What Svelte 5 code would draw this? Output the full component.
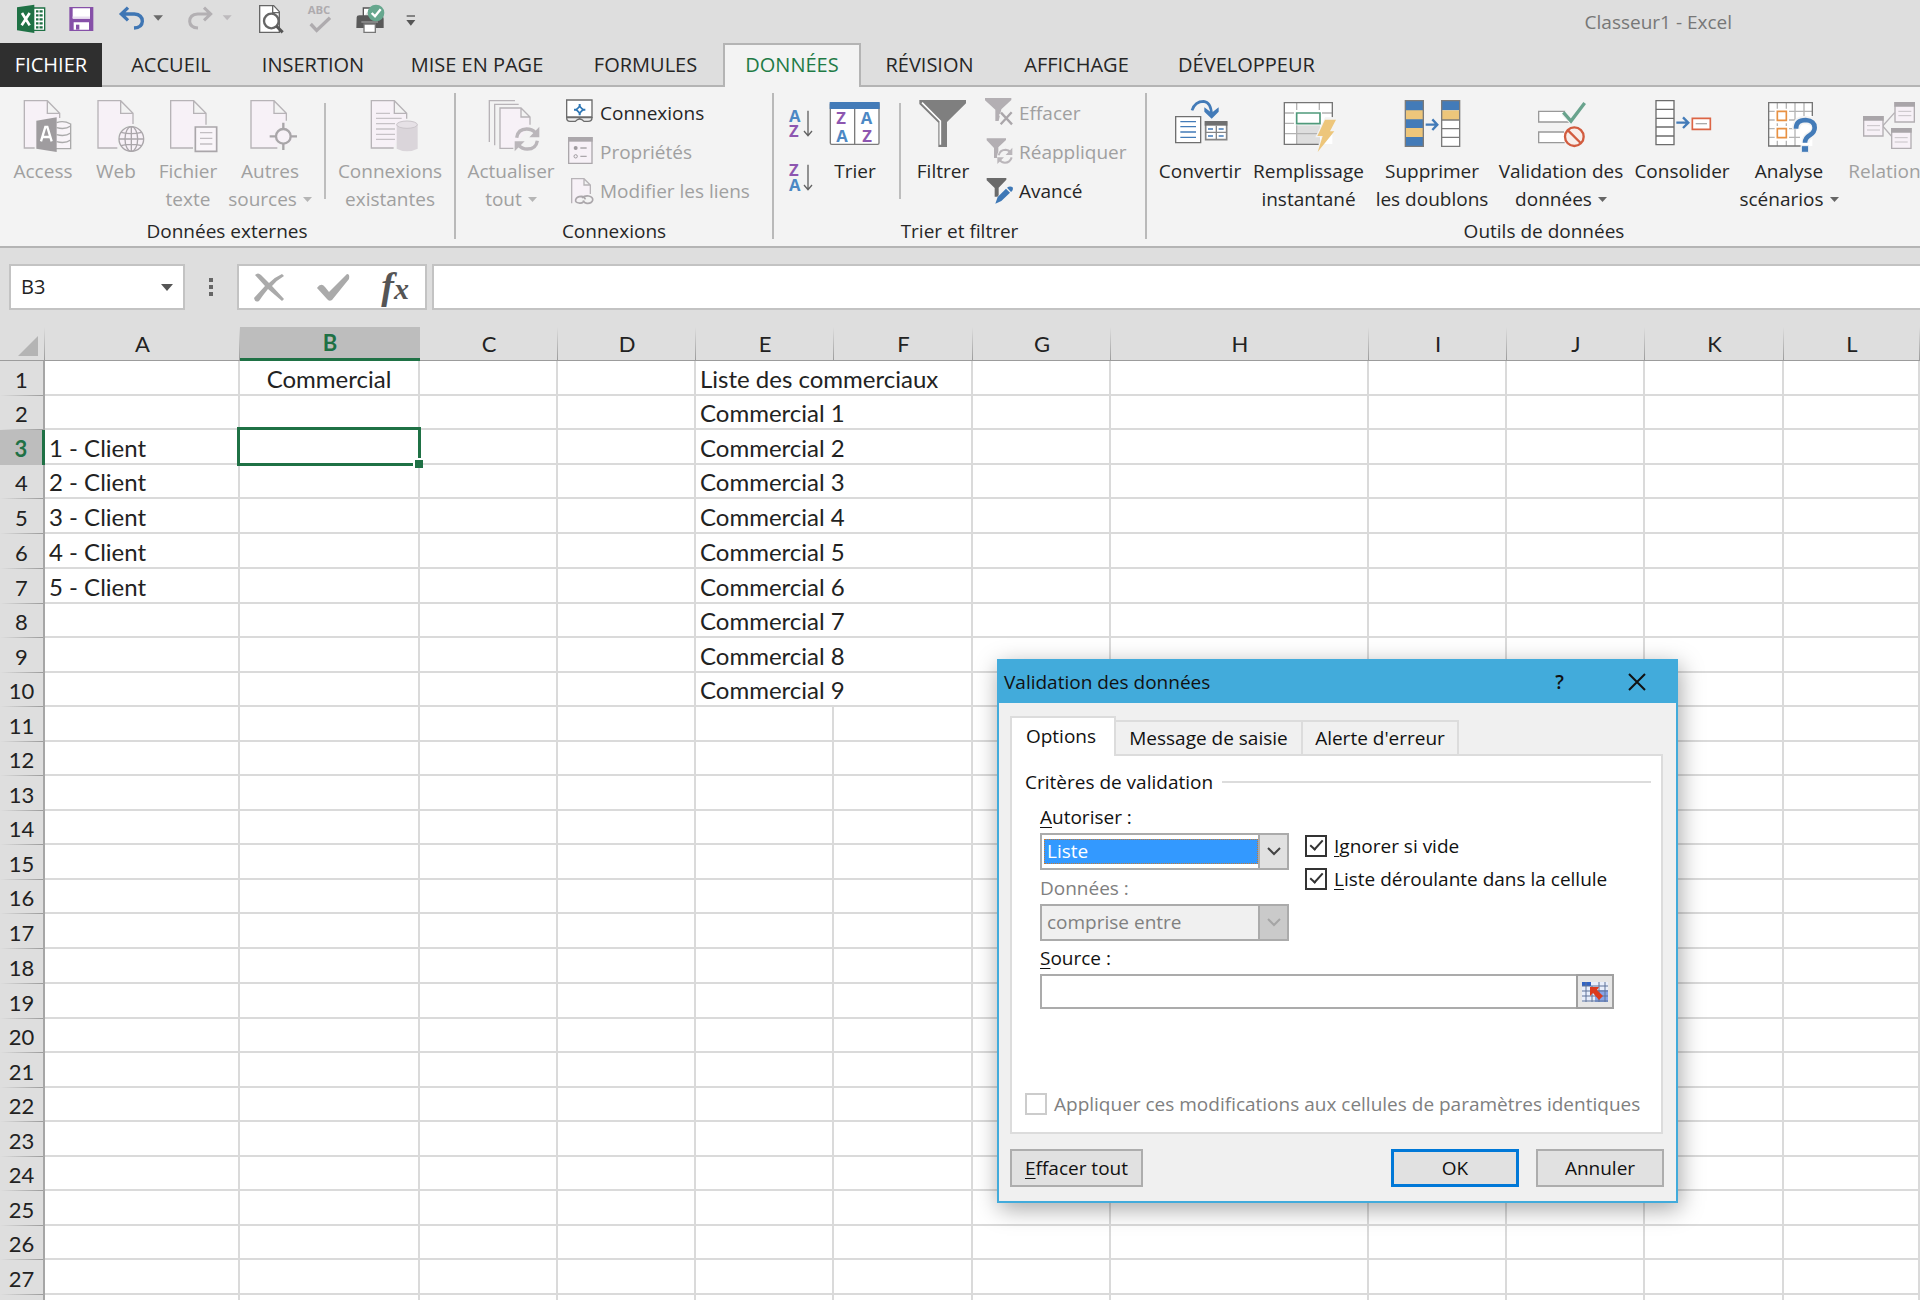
<script>
  const tabs = ['ACCUEIL', 'INSERTION', 'MISE EN PAGE', 'FORMULES', 'DONNÉES', 'RÉVISION', 'AFFICHAGE', 'DÉVELOPPEUR'];
  const columns = ['A', 'B', 'C', 'D', 'E', 'F', 'G', 'H', 'I', 'J', 'K', 'L'];
  const clients = { 3: '1 - Client', 4: '2 - Client', 5: '3 - Client', 6: '4 - Client', 7: '5 - Client' };
  const numberedRows = 27;

  function listEntry(row) {
    if (row === 1) return 'Liste des commerciaux';
    return row <= 10 ? `Commercial ${row - 1}` : '';
  }

  // One extra unnumbered row fills the strip under the last full row.
  const rows = Array.from({ length: numberedRows + 1 }, (_, i) => ({
    n: i + 1,
    label: i < numberedRows ? i + 1 : '',
    client: clients[i + 1] ?? '',
    entry: listEntry(i + 1),
  }));

  let ignoreBlank = $state(true);
  let inCell = $state(true);
</script>

{#snippet caret()}
  <svg class="caret" viewBox="0 0 9 5" aria-hidden="true"><path d="M0 0H9L4.5 5Z" /></svg>
{/snippet}

{#snippet big(icon, first, second, hasCaret, cls)}
  <button class="big {cls}">
    {@render icon()}
    <span class="lbl">{first}</span>
    {#if second}<span class="lbl">{second}{#if hasCaret}{@render caret()}{/if}</span>{/if}
  </button>
{/snippet}

{#snippet small(icon, text, cls)}
  <button class="small {cls}">{@render icon()}<span>{text}</span></button>
{/snippet}

{#snippet icoAccess()}
  <svg class="ico" viewBox="39 291 180 168" aria-hidden="true">
    <path d="M104 444H73V302H142L179 340V354M142 302V340H179" fill="#f7f1f7" stroke="#b7b3b7" stroke-width="4" />
    <path d="M165 368V446H212V372Q190 360 170 368" fill="#f8f4f8" stroke="#aaa" stroke-width="4" />
    <path d="M170 383Q195 390 212 378M170 404Q195 411 212 399M170 425Q195 432 212 420" fill="none" stroke="#aaa" stroke-width="4" />
    <path d="M109 362L170 352V456L109 446Z" fill="#9f9c9f" />
    <path d="M123 424L136 381H142L155 424M128 411H150" fill="none" stroke="#fff" stroke-width="7" />
  </svg>
{/snippet}
{#snippet icoWeb()}
  <svg class="ico" viewBox="256 291 180 168" aria-hidden="true">
    <path d="M350 444H292V302H360L397 340V372M360 302V340H397" fill="#f7f1f7" stroke="#b7b3b7" stroke-width="4" />
    <circle cx="392" cy="417" r="43" fill="#f3f3f3" />
    <g fill="none" stroke="#aaa6aa" stroke-width="4">
      <circle cx="392" cy="417" r="37" fill="#f7f1f7" />
      <ellipse cx="392" cy="417" rx="19" ry="37" /><path d="M392 380V454M355 417H429M361 397Q392 405 423 397M361 437Q392 429 423 437" />
    </g>
  </svg>
{/snippet}
{#snippet icoFile()}
  <svg class="ico" viewBox="471 291 180 168" aria-hidden="true">
    <path d="M576 444H509V302H578L615 340V374M578 302V340H615" fill="#f7f1f7" stroke="#b7b3b7" stroke-width="4" />
    <path d="M583 381H647V454H583Z" fill="#f9f5f9" stroke="#aaa6aa" stroke-width="5" />
    <path d="M597 398H634M597 415H634M597 432H634" stroke="#c2bec2" stroke-width="4" />
  </svg>
{/snippet}
{#snippet icoOther()}
  <svg class="ico" viewBox="720 291 180 168" aria-hidden="true">
    <path d="M832 444H753V302H822L859 340V362M822 302V340H859" fill="#f7f1f7" stroke="#b7b3b7" stroke-width="4" />
    <circle cx="850" cy="409" r="30" fill="#f5f1f5" />
    <circle cx="850" cy="409" r="22" fill="#f7f1f7" stroke="#a9a6a9" stroke-width="7" />
    <path d="M850 368V387M850 431V450M809 409H828M872 409H891" stroke="#a9a6a9" stroke-width="7" />
  </svg>
{/snippet}
{#snippet icoExisting()}
  <svg class="ico" viewBox="1077 291 180 168" aria-hidden="true">
    <path d="M1178 444H1111V302H1180L1217 340V356M1180 302V340H1217" fill="#f7f1f7" stroke="#b7b3b7" stroke-width="4" />
    <path d="M1125 340H1167M1125 355H1202M1125 371H1182M1125 387H1182M1125 403H1182M1125 418H1182" stroke="#c6c2c6" stroke-width="4" />
    <path d="M1187 373V446Q1218 462 1250 446V373Z" fill="#dad5da" />
    <ellipse cx="1218" cy="374" rx="31" ry="11" fill="#e6e1e6" stroke="#cac5ca" stroke-width="3" />
  </svg>
{/snippet}
{#snippet icoRefresh()}
  <svg class="ico" viewBox="93 51 180 168" aria-hidden="true">
    <path d="M118 186V62H195M134 196V73H206" fill="none" stroke="#b7b3b7" stroke-width="4" />
    <path d="M190 205H150V84H213L240 111V134M213 84V111H240" fill="#f7f1f7" stroke="#b7b3b7" stroke-width="4" />
    <path d="M200 173Q204 147 230 147Q246 147 256 158M262 182Q258 207 232 207Q216 207 206 196" fill="none" stroke="#bab6ba" stroke-width="10" />
    <path d="M268 140V172H238ZM194 214V184H224Z" fill="#bab6ba" />
  </svg>
{/snippet}
{#snippet icoConn()}
  <svg class="ico-s" viewBox="350 54 84 84" aria-hidden="true">
    <path d="M352 57H428V108H352Z" fill="#fff" stroke="#6c6c6c" stroke-width="4" />
    <path d="M352 110Q352 121 362 121H378Q384 114 391 114T404 121H416Q428 121 428 110Z" fill="#eee" stroke="#6c6c6c" stroke-width="4" />
    <path d="M391 76L401 86L391 96L381 86Z" fill="#fff" stroke="#2f77b5" stroke-width="5" />
    <path d="M391 69V78M391 94V103M374 86H383M399 86H408" stroke="#2f77b5" stroke-width="6" />
  </svg>
{/snippet}
{#snippet icoProps()}
  <svg class="ico-s" viewBox="350 174 84 84" aria-hidden="true">
    <path d="M358 173H428V250H358Z" fill="#f7f1f7" stroke="#aba7ab" stroke-width="4" />
    <path d="M356 171H430V185H356Z" fill="#aba7ab" />
    <circle cx="379" cy="204" r="6" fill="#9f9b9f" /><circle cx="379" cy="229" r="5" fill="none" stroke="#9f9b9f" stroke-width="3" />
    <path d="M393 204H412M393 229H412" stroke="#aba7ab" stroke-width="4" />
  </svg>
{/snippet}
{#snippet icoLinks()}
  <svg class="ico-s" viewBox="350 291 84 84" aria-hidden="true">
    <path d="M367 370V296H404L423 315V342M404 296V315H423" fill="#f7f1f7" stroke="#b7b3b7" stroke-width="4" />
    <g fill="none" stroke="#aba7ab" stroke-width="5"><path d="M402 366Q396 371 389 369Q377 368 379 359Q382 349 396 349Q406 350 408 358" /><path d="M398 354Q406 346 418 348Q432 351 430 361Q427 371 413 370Q403 369 402 361" /></g>
  </svg>
{/snippet}
{#snippet icoTrier()}
  <svg class="ico" viewBox="195 51 180 168" aria-hidden="true">
    <rect x="211" y="68" width="146" height="125" rx="4" fill="#fff" stroke="#7b7b7b" stroke-width="4" />
    <path d="M209 66H359V87H209Z" fill="#437bb8" /><path d="M284 87V192" stroke="#7b7b7b" stroke-width="4" />
    <g class="az"><text class="z" x="229" y="133">Z</text><text class="a" x="229" y="185">A</text><text class="a" x="302" y="133">A</text><text class="z" x="307" y="185">Z</text></g>
  </svg>
{/snippet}
{#snippet icoFilter()}
  <svg class="ico" viewBox="459 51 180 168" aria-hidden="true">
    <path d="M478 60H618V70L561 126V201H535V128L478 72Z" fill="#7f7f7f" />
    <path d="M486 68L541 123V194" fill="none" stroke="#fff" stroke-width="5" />
  </svg>
{/snippet}
{#snippet icoClear()}
  <svg class="ico-s" viewBox="675 54 84 84" aria-hidden="true">
    <path d="M675 51H754V57L724 85L716 120H706V86L675 58Z" fill="#b3afb3" />
    <path d="M722 96L756 130M755 94L721 131" stroke="#f3f3f3" stroke-width="16" /><path d="M723 95L756 130M755 94L722 130" stroke="#aaa6aa" stroke-width="7" />
  </svg>
{/snippet}
{#snippet icoReapply()}
  <svg class="ico-s" viewBox="675 174 84 84" aria-hidden="true">
    <path d="M680 175H738V180L715 202V234H702V204L680 181Z" fill="#b3afb3" />
    <circle cx="735" cy="229" r="24" fill="#f3f3f3" />
    <path d="M716 226Q720 209 737 209Q746 210 751 216M755 232Q750 248 735 248Q724 248 718 239" fill="none" stroke="#bab6ba" stroke-width="6" />
    <path d="M757 203V225H737ZM712 252V232H732Z" fill="#bab6ba" />
  </svg>
{/snippet}
{#snippet icoAdvanced()}
  <svg class="ico-s" viewBox="675 291 84 84" aria-hidden="true">
    <path d="M680 294H739V299L716 323V350H704V324L680 301Z" fill="#6a6a6a" />
    <path d="M710 370L746 328" stroke="#f3f3f3" stroke-width="22" />
    <path d="M713 351L738 326L750 338L724 363L706 371ZM741 323Q750 317 758 322Q761 330 753 336Z" fill="#3e78b6" />
  </svg>
{/snippet}
{#snippet icoConvert()}
  <svg class="ico" viewBox="90 51 180 168" aria-hidden="true">
    <path d="M107 110H182V188H107Z" fill="#fff" stroke="#6f6f6f" stroke-width="4" />
    <path d="M121 125H168M121 140H168M121 156H168M121 172H168" stroke="#437bb8" stroke-width="4" />
    <path d="M197 126H260V179H197Z" fill="#fff" stroke="#858585" stroke-width="5" />
    <path d="M194 123H262V137H194Z" fill="#707070" /><path d="M229 137V178M197 157H260" stroke="#858585" stroke-width="4" />
    <path d="M204 147H219M236 147H251M204 168H219M236 168H251" stroke="#437bb8" stroke-width="5" />
    <path d="M156 91Q165 64 191 64Q213 66 215 104" fill="none" stroke="#437bb8" stroke-width="8" />
    <path d="M193 82L215 98L236 82V95L215 116L193 95Z" fill="#437bb8" />
  </svg>
{/snippet}
{#snippet icoFlash()}
  <svg class="ico" viewBox="417 51 180 168" aria-hidden="true">
    <path d="M433 68H577V192H433Z" fill="#fff" /><path d="M470 136H540V192H470Z" fill="#dedede" />
    <path d="M470 68V90M470 136V192M538 68V90M433 99H462M546 99H577M433 130H462M433 161H540" fill="none" stroke="#b2b2b2" stroke-width="4" />
    <path d="M577 112V68H433V193H536" fill="none" stroke="#757575" stroke-width="4" />
    <path d="M470 99H540V131H470Z" fill="#fff" stroke="#4f9a7b" stroke-width="5" />
    <path d="M555 112H596L580 146H590L530 220L543 172H526Z" fill="#f3f3f3" /><path d="M555 119H588L570 154H583L533 216L548 168H532Z" fill="#edc67b" />
  </svg>
{/snippet}
{#snippet icoDedup()}
  <svg class="ico" viewBox="787 51 180 168" aria-hidden="true">
    <path d="M797 62H851V199H797Z" fill="#437bb8" /><path d="M797 91H851V118H797ZM797 144H851V171H797Z" fill="#edc67b" />
    <path d="M906 62H960V199H906Z" fill="#fff" /><path d="M906 62H960V91H906Z" fill="#437bb8" /><path d="M906 91H960V120H906Z" fill="#edc67b" />
    <path d="M797 62H851V199H797ZM906 62H960V199H906ZM906 120H960M906 146H960M906 172H960" fill="none" stroke="#7b7b7b" stroke-width="4" />
    <path d="M858 134H892M878 118L893 134L878 150" fill="none" stroke="#437bb8" stroke-width="7" />
  </svg>
{/snippet}
{#snippet icoValid()}
  <svg class="ico" viewBox="33 51 180 168" aria-hidden="true">
    <path d="M136 94H56V126H150M132 156H56V188H134" fill="#fff" stroke="#999" stroke-width="4" />
    <path d="M131 98L153 122L193 70" fill="none" stroke="#f3f3f3" stroke-width="18" /><path d="M130 97L153 123L194 69" fill="none" stroke="#69a38d" stroke-width="10" />
    <circle cx="163" cy="170" r="28" fill="#f8eeea" stroke="#d25c3f" stroke-width="7" /><path d="M144 151L182 189" stroke="#d25c3f" stroke-width="7" />
  </svg>
{/snippet}
{#snippet icoConso()}
  <svg class="ico" viewBox="396 51 180 168" aria-hidden="true">
    <path d="M408 62H462V194H408ZM408 88H462M408 115H462M408 141H462M408 168H462" fill="#fff" stroke="#6c6c6c" stroke-width="4" />
    <path d="M469 128H504M489 112L505 128L489 144" fill="none" stroke="#437bb8" stroke-width="7" />
    <path d="M517 115H571V148H517Z" fill="#fff" stroke="#dc6545" stroke-width="5" /><path d="M527 131H561" stroke="#aaa" stroke-width="4" />
  </svg>
{/snippet}
{#snippet icoWhatIf()}
  <svg class="ico" viewBox="717 51 180 168" aria-hidden="true">
    <path d="M746 68H877V198H746Z" fill="#fff" />
    <path d="M772 68V198M799 68V198M825 68V198M852 68V108M746 94H877M746 120H830M746 146H830M746 172H840" fill="none" stroke="#b5b5b5" stroke-width="4" />
    <path d="M877 108V68H746V198H842" fill="none" stroke="#757575" stroke-width="4" />
    <path d="M764 86H807V130H764ZM764 138H807V182H764Z" fill="#fff" /><path d="M772 94H799V121H772ZM772 146H799V173H772Z" fill="#fff" stroke="#e89143" stroke-width="5" />
    <path d="M828 148Q828 120 856 120Q886 122 886 143Q886 156 870 166Q856 174 856 188" fill="none" stroke="#f3f3f3" stroke-width="24" />
    <path d="M828 146Q828 120 857 120Q884 122 884 143Q884 156 870 165Q855 174 855 188" fill="none" stroke="#437bb8" stroke-width="14" /><path d="M844 197H866V217H844Z" fill="#437bb8" stroke="#f3f3f3" stroke-width="3" />
  </svg>
{/snippet}
{#snippet icoRel()}
  <svg class="ico" viewBox="1017 51 180 168" aria-hidden="true">
    <path d="M1088 138L1124 98M1088 138L1114 168" stroke="#b7b3b7" stroke-width="4" />
    <g fill="#f7f1f7" stroke="#b2aeb2" stroke-width="4"><path d="M1031 110H1089V168H1031ZM1125 68H1183V126H1125ZM1115 146H1173V205H1115Z" /></g>
    <path d="M1029 108H1091V122H1029ZM1123 66H1185V80H1123ZM1113 144H1175V158H1113Z" fill="#a9a5a9" />
    <path d="M1041 137H1080M1041 150H1080M1135 94H1174M1135 107H1174M1124 173H1163M1124 186H1163" stroke="#c6c2c6" stroke-width="3" />
  </svg>
{/snippet}

<div class="app">
  <header class="titlebar">
    <svg class="q" viewBox="48 12 90 90" role="img" aria-label="Excel">
      <path d="M98 24H134V91H98Z" fill="#fff" stroke="#1f7145" stroke-width="4" />
      <path d="M108 34H128M108 46H128M108 58H128M108 70H128M108 82H128" stroke="#1f7145" stroke-width="7" /><path d="M117 28V88" stroke="#fff" stroke-width="3" />
      <path d="M51 22L103 14V99L51 91Z" fill="#1f7145" /><path d="M66 39L89 76M89 39L65 76" stroke="#fff" stroke-width="8" />
    </svg>
    <button aria-label="Enregistrer">
      <svg class="q" viewBox="198 12 90 90"><path d="M208 21H280V93H208Z" fill="#8650a8" /><path d="M218 25H270V56H218ZM221 67H267V89H221Z" fill="#fff" /><path d="M228 74H238V89H228Z" fill="#8650a8" /><path d="M218 52H270" stroke="#e9dff0" stroke-width="5" /></svg>
    </button>
    <button aria-label="Annuler la saisie">
      <svg class="q wide" viewBox="348 12 150 90"><path d="M364 42H403Q427 44 427 64Q426 83 402 84M384 23L364 42L384 61" fill="none" stroke="#3f76b4" stroke-width="10" /><path d="M460 46H489L474.500 62Z" fill="#6a6a6a" /></svg>
    </button>
    <button aria-label="Rétablir">
      <svg class="q wide" viewBox="558 12 150 90"><path d="M632 42H593Q569 44 569 64Q570 83 594 84M612 23L632 42L612 61" fill="none" stroke="#b3b0b3" stroke-width="9" /><path d="M668 46H695L681.500 61Z" fill="#bdbabd" /></svg>
    </button>
    <button aria-label="Aperçu avant impression">
      <svg class="q" viewBox="768 12 90 90"><path d="M779 17H821L838 35V97H779Z" fill="#fff" stroke="#666" stroke-width="4" /><path d="M818 17V38H838" fill="none" stroke="#666" stroke-width="4" /><circle cx="814" cy="63" r="22" fill="#fff" stroke="#666" stroke-width="7" /><path d="M829 78L848 97" stroke="#555" stroke-width="9" /></svg>
    </button>
    <button aria-label="Orthographe">
      <svg class="q" viewBox="918 12 90 90"><text class="abc" x="923" y="41">ABC</text><path d="M932 72L950 91L990 53" fill="none" stroke="#aeabae" stroke-width="10" /></svg>
    </button>
    <button aria-label="Impression rapide">
      <svg class="q" viewBox="1068 12 90 90"><path d="M1090 52V24H1112" fill="#fff" stroke="#555" stroke-width="4" /><path d="M1070 52Q1070 46 1078 46H1144Q1151 48 1151 56V84H1069Z" fill="#595959" /><path d="M1092 72H1126V97H1092Z" fill="#fff" stroke="#777" stroke-width="4" /><path d="M1084 66H1134" stroke="#8d8d8d" stroke-width="5" /><circle cx="1128" cy="39" r="25" fill="#66a78e" /><path d="M1115 39L1125 49L1142 28" fill="none" stroke="#fff" stroke-width="7" /></svg>
    </button>
    <button aria-label="Personnaliser la barre">
      <svg class="q more" viewBox="1217 12 60 90"><path d="M1219 48H1244" stroke="#555" stroke-width="4" /><path d="M1218 60H1245L1231.500 77Z" fill="#555" /></svg>
    </button>
    <span class="doc">Classeur1 - Excel</span>
  </header>

  <nav class="tabs">
    <button class="tab file">FICHIER</button>
    {#each tabs as t}
      <button class="tab" class:on={t === 'DONNÉES'}>{t}</button>
    {/each}
  </nav>

  <section class="ribbon">
    <div class="group">
      <div class="items">
        {@render big(icoAccess, 'Access', '', false, 'off w86')}
        {@render big(icoWeb, 'Web', '', false, 'off w60')}
        {@render big(icoFile, 'Fichier', 'texte', false, 'off w84')}
        {@render big(icoOther, 'Autres', 'sources', true, 'off w80')}
        <i class="bar"></i>
        {@render big(icoExisting, 'Connexions', 'existantes', false, 'off w128')}
      </div>
      <div class="gname">Données externes</div>
    </div>
    <div class="group">
      <div class="items">
        {@render big(icoRefresh, 'Actualiser', 'tout', true, 'off w110')}
        <div class="stack wide-stack">
          {@render small(icoConn, 'Connexions', '')}
          {@render small(icoProps, 'Propriétés', 'off')}
          {@render small(icoLinks, 'Modifier les liens', 'off')}
        </div>
      </div>
      <div class="gname">Connexions</div>
    </div>
    <div class="group">
      <div class="items">
        <div class="sorts">
          <button aria-label="Trier de A à Z">
            <svg class="sort" viewBox="85 87 81 90"><g class="az"><text class="a" x="88" y="126">A</text><text class="z" x="88" y="170">Z</text></g><path d="M145 92V165M133 153L145 167L157 153" fill="none" stroke="#626262" stroke-width="4" /></svg>
          </button>
          <button aria-label="Trier de Z à A">
            <svg class="sort" viewBox="85 87 81 90"><g class="az"><text class="z" x="88" y="126">Z</text><text class="a" x="88" y="170">A</text></g><path d="M145 92V165M133 153L145 167L157 153" fill="none" stroke="#626262" stroke-width="4" /></svg>
          </button>
        </div>
        {@render big(icoTrier, 'Trier', '', false, 'w60')}
        <i class="bar"></i>
        {@render big(icoFilter, 'Filtrer', '', false, 'w84')}
        <div class="stack">
          {@render small(icoClear, 'Effacer', 'off')}
          {@render small(icoReapply, 'Réappliquer', 'off')}
          {@render small(icoAdvanced, 'Avancé', '')}
        </div>
      </div>
      <div class="gname">Trier et filtrer</div>
    </div>
    <div class="group tools">
      <div class="items">
        {@render big(icoConvert, 'Convertir', '', false, 'w86')}
        {@render big(icoFlash, 'Remplissage', 'instantané', false, 'w131')}
        {@render big(icoDedup, 'Supprimer', 'les doublons', false, 'w116')}
        {@render big(icoValid, 'Validation des', 'données', true, 'w142')}
        {@render big(icoConso, 'Consolider', '', false, 'w100')}
        {@render big(icoWhatIf, 'Analyse', 'scénarios', true, 'w114')}
        {@render big(icoRel, 'Relations', '', false, 'off w86')}
      </div>
      <div class="gname">Outils de données</div>
    </div>
  </section>

  <section class="formula">
    <div class="box namebox">
      <input aria-label="Zone Nom" value="B3" />
      <button aria-label="Liste des noms"><svg class="namecaret" viewBox="0 0 12 7"><path d="M0 0H12L6 7Z" fill="#555" /></svg></button>
    </div>
    <svg class="dots" viewBox="0 0 4 18" aria-hidden="true"><path d="M0 0H4V4H0ZM0 7H4V11H0ZM0 14H4V18H0Z" fill="#666" /></svg>
    <div class="box fxbox">
      <button aria-label="Annuler l'entrée"><svg class="fi" viewBox="0 0 32 32"><path d="M2 4Q5 1 8 4L16 12Q22 6 29 3L31 5Q24 9 19 15L31 28L29 30L15 18Q10 24 6 30Q2 32 1 27L12 15Z" fill="#aaa" /></svg></button>
      <button aria-label="Entrer"><svg class="fi" viewBox="0 0 32 32"><path d="M0 17Q4 11 8 16L12 21L30 3Q33 3 32 8L15 29Q12 31 10 28Z" fill="#aaa" /></svg></button>
      <button class="fx" aria-label="Insérer une fonction"><span class="f">f</span><span class="x">x</span></button>
    </div>
    <input class="box bar-input" aria-label="Barre de formule" />
  </section>

  <main class="sheet">
    <table>
      <colgroup>
        <col class="c-head" /><col class="c-a" /><col class="c-b" /><col class="c-m" /><col class="c-m" /><col class="c-m" /><col class="c-l" />
        <col class="c-m" /><col class="c-h" /><col class="c-m" /><col class="c-m" /><col class="c-l" /><col />
      </colgroup>
      <thead>
        <tr>
          <th class="corner"><svg viewBox="0 0 20 20" aria-hidden="true"><path d="M20 0V20H0Z" fill="#b4b4b4" /></svg></th>
          {#each columns as c}<th scope="col" class:picked={c === 'B'}>{c}</th>{/each}
        </tr>
      </thead>
      <tbody>
        {#each rows as r}
          <tr>
            <th scope="row" class:picked={r.n === 3}>{r.label}</th>
            <td>{r.client}</td>
            <td class="mid">{#if r.n === 1}Commercial{/if}{#if r.n === 3}<span class="cursor"><i></i></span>{/if}</td>
            <td></td>
            <td></td>
            {#if r.entry}<td colspan="2">{r.entry}</td>{:else}<td></td><td></td>{/if}
            <td></td><td></td><td></td><td></td><td></td><td></td>
          </tr>
        {/each}
      </tbody>
    </table>
  </main>

  <div class="dialog" role="dialog" aria-labelledby="dlg-title">
    <div class="dhead">
      <h2 id="dlg-title">Validation des données</h2>
      <button class="help" aria-label="Aide">?</button>
      <button aria-label="Fermer"><svg class="close" viewBox="0 0 18 18"><path d="M1 1L17 17M17 1L1 17" fill="none" stroke="#111" stroke-width="2" /></svg></button>
    </div>
    <div class="dbody">
      <div class="dtabs">
        <button class="on">Options</button><button>Message de saisie</button><button>Alerte d'erreur</button>
      </div>
      <div class="panel">
        <h3>Critères de validation</h3>
        <div class="fields">
          <div class="left">
            <label for="allow"><u>A</u>utoriser :</label>
            <div class="combo">
              <select id="allow"><option>Liste</option></select>
              <span class="drop"><svg viewBox="0 0 14 9"><path d="M1 1L7 7L13 1" /></svg></span>
            </div>
            <label for="data" class="dim">Données :</label>
            <div class="combo dis">
              <select id="data" disabled><option>comprise entre</option></select>
              <span class="drop"><svg viewBox="0 0 14 9"><path d="M1 1L7 7L13 1" /></svg></span>
            </div>
          </div>
          <div class="checks">
            <label class="check"><input type="checkbox" bind:checked={ignoreBlank} /><span><u>I</u>gnorer si vide</span></label>
            <label class="check"><input type="checkbox" bind:checked={inCell} /><span><u>L</u>iste déroulante dans la cellule</span></label>
          </div>
        </div>
        <label class="srclabel" for="source"><u>S</u>ource :</label>
        <div class="source">
          <input id="source" />
          <button aria-label="Sélectionner la plage">
            <svg viewBox="0 0 28 22"><path d="M1 1H27V21H1Z" fill="#e8eefb" /><path d="M1 1H10V5H1Z" fill="#2f62c4" /><path d="M14 9H27V21H14Z" fill="#86a4e8" /><path d="M1 5H27M1 10H27M1 15H27M1 20H27M5 1V21M11 5V21M18 1V21M24 1V21" fill="none" stroke="#5f7398" stroke-width="1" /><path d="M9 6L18 6L16 9L22 15L18 19L12 12L9 15Z" fill="#dc3a1e" /></svg>
          </button>
        </div>
        <label class="check apply dim"><input type="checkbox" disabled /><span>Appliquer ces modifications aux cellules de paramètres identiques</span></label>
      </div>
      <div class="actions">
        <button class="clear"><u>E</u>ffacer tout</button>
        <button class="ok">OK</button>
        <button>Annuler</button>
      </div>
    </div>
  </div>
</div>

<style>
  :global(body) { margin: 0; }
  .app {
    position: relative; display: flex; flex-direction: column; height: 100vh; overflow: hidden;
    background: #dedede; color: #262626; font: 19px/28px "Open Sans", "Noto Sans", sans-serif;
  }
  .app, .app * { box-sizing: border-box; }
  button, input, select { font: inherit; color: inherit; margin: 0; padding: 0; border: 0; background: none; border-radius: 0; }
  svg { display: block; overflow: visible; }

  .titlebar { display: flex; align-items: center; gap: 20px; height: 43px; padding: 0 188px 6px 16px; flex: none; }
  .q { width: 30px; height: 30px; }
  .q.wide { width: 50px; }
  .q.more { width: 20px; }
  .abc { font: bold 34px "Open Sans", sans-serif; fill: #aeabae; }
  .doc { margin-left: auto; padding-top: 6px; color: #777; }

  .tabs { display: grid; grid-template-columns: 102px 138px 146px 182px 155px 138px 137px 157px 183px; height: 44px; flex: none; box-shadow: inset 0 -2px #b4b4b4; }
  .tab { font-size: 20px; white-space: nowrap; }
  .tab.file { background: #2f2f2f; color: #fff; }
  .tab.on { background: #f3f3f3; color: #1f7b46; border: 2px solid #b4b4b4; border-bottom: 0; padding-bottom: 2px; }

  .ribbon { display: flex; flex: none; height: 161px; background: #f3f3f3; border-bottom: 2px solid #b4b4b4; padding-top: 6px; overflow: hidden; }
  .group { display: flex; flex-direction: column; flex: none; height: 146px; border-right: 2px solid #b9b9b9; }
  .tools { padding-left: 10px; width: 794px; border: 0; }
  .items { display: flex; flex: none; height: 124px; align-items: flex-start; }
  .gname { text-align: center; line-height: 28px; white-space: nowrap; }
  .tools .gname { padding-right: 10px; }
  .big { display: flex; flex-direction: column; align-items: center; padding-top: 4px; flex: none; }
  .ico { width: 60px; height: 56px; margin-bottom: 4px; }
  .lbl { display: flex; align-items: center; justify-content: center; height: 28px; white-space: nowrap; }
  .caret { width: 9px; height: 5px; margin-left: 6px; fill: #666; }
  .off { color: #a0a0a0; }
  .off .caret { fill: #b5b5b5; }
  .w60 { width: 60px; } .w80 { width: 80px; } .w84 { width: 84px; } .w86 { width: 86px; } .w100 { width: 100px; } .w110 { width: 110px; }
  .w114 { width: 114px; } .w116 { width: 116px; } .w128 { width: 128px; } .w131 { width: 131px; } .w142 { width: 142px; }
  .bar { width: 2px; height: 96px; margin: 10px 0 0 14px; background: #bdbdbd; flex: none; }
  .stack { display: flex; flex-direction: column; width: 160px; }
  .wide-stack { width: 206px; }
  .small { display: flex; align-items: center; gap: 6px; height: 39px; white-space: nowrap; }
  .ico-s { width: 28px; height: 28px; flex: none; }
  .sorts { display: flex; flex-direction: column; gap: 24px; width: 51px; padding: 16px 0 0 14px; }
  .sort { width: 27px; height: 30px; }
  .az { font: bold 50px "Open Sans", sans-serif; }
  .a { fill: #4c88c4; }
  .z { fill: #8d56b0; }

  .formula { display: flex; align-items: center; height: 79px; padding: 0 0 1px 9px; flex: none; }
  .box { display: flex; align-items: center; height: 46px; background: #fff; border: 2px solid #c3c3c3; }
  .namebox { width: 176px; padding: 0 10px; }
  .namebox input { flex: 1; min-width: 0; font-size: 20px; color: #222; }
  .namecaret { width: 12px; height: 7px; }
  .dots { width: 4px; height: 18px; margin: 0 24px; }
  .fxbox { width: 190px; justify-content: space-between; padding: 0 16px 0 14px; }
  .fi { width: 32px; height: 32px; }
  .fx { font: italic bold 38px/40px "Liberation Serif", serif; color: #555; }
  .fx .x { font-size: 30px; }
  .bar-input { flex: 1; min-width: 0; margin-left: 5px; border-right: 0; }

  .sheet { flex: 1; min-height: 0; overflow: hidden; background: #fff; color: #222; font: 24px/32px Lato, sans-serif; }
  table { width: 100%; table-layout: fixed; border-collapse: separate; border-spacing: 0; }
  .c-head { width: 45px; } .c-a { width: 195px; } .c-b { width: 180px; } .c-m { width: 138px; } .c-l { width: 139px; } .c-h { width: 258px; }
  th, td { padding: 0; font-weight: 400; white-space: nowrap; line-height: 30px; }
  th { font-size: 22px; }
  tbody tr > * { height: 34px; padding-top: 2px; }
  tbody tr:nth-child(odd) > *, tbody tr:nth-child(12n + 6) > * { height: 35px; }
  thead tr > th { height: 34px; background: linear-gradient(#dedede, #9c9c9c) right / 1px 100% no-repeat #dedede; border-bottom: 1px solid #9c9c9c; }
  thead th.picked { background: #bdbdbd; color: #1f7145; font-weight: 700; border-bottom: 3px solid #1f7145; }
  .corner svg { width: 20px; height: 20px; margin: 4px 0 0 18px; }
  tbody th { background: linear-gradient(to right, #dedede, #9c9c9c) bottom / 100% 1px no-repeat #dedede; border-right: 2px solid #a6a6a6; }
  tbody th.picked { background: #bdbdbd; color: #1f7145; font-weight: 700; border-right: 3px solid #1f7145; }
  td { position: relative; padding-left: 4px; border: solid #dadada; border-width: 0 2px 2px 0; }
  .mid { text-align: center; padding-left: 0; }
  .cursor { position: absolute; inset: -3px; border: 3px solid #1f7145; z-index: 1; }
  .cursor i { position: absolute; right: -5px; bottom: -5px; width: 10px; height: 10px; background: #1f7145; border: solid #fff; border-width: 2px 0 0 2px; }

  .dialog { position: absolute; left: 997px; top: 659px; z-index: 2; width: 681px; background: #f0f0f0; border: 2px solid #42abdb; color: #111; box-shadow: 2px 6px 22px rgba(0, 0, 0, 0.35); }
  .dhead { display: flex; align-items: center; height: 42px; padding: 0 30px 0 5px; background: #42abdb; }
  h2, h3 { margin: 0; font: inherit; white-space: nowrap; }
  h2 { flex: 1; }
  .help { margin-right: 64px; font-weight: 600; }
  .close { width: 18px; height: 18px; }
  .dbody { padding: 13px 11px 14px; }
  .dtabs { display: flex; align-items: flex-end; height: 38px; }
  .dtabs button { height: 34px; width: 187px; border: 2px solid #dcdcdc; border-left: 0; border-bottom: 0; white-space: nowrap; }
  .dtabs button:last-child { width: 156px; }
  .dtabs .on { position: relative; top: 2px; width: 106px; height: 40px; background: #fff; border-left: 2px solid #dcdcdc; padding: 0 4px 2px 0; }
  .panel { border: 2px solid #dcdcdc; background: #fff; padding: 12px 10px 12px 13px; width: 653px; }
  h3 { display: flex; align-items: center; gap: 9px; }
  h3::after { content: ""; flex: 1; height: 2px; background: #dcdcdc; }
  .fields { display: flex; gap: 16px; padding: 7px 0 0 15px; }
  .left { width: 249px; }
  .left label { display: block; height: 30px; line-height: 28px; }
  .left .combo + label { margin-top: 4px; }
  .dim { color: #808080; }
  .combo { display: flex; height: 37px; border: 2px solid #ababab; background: #fff; }
  .combo select { flex: 1; min-width: 0; height: 25px; margin: 4px 2px; padding: 0 2px; appearance: none; background: #3399ff; color: #fff; border: 1px dotted #c87a32; line-height: 23px; }
  .drop { display: flex; align-items: center; justify-content: center; width: 31px; background: #e1e1e1; border: 2px solid #ababab; margin: -2px; }
  .drop svg { width: 14px; height: 9px; fill: none; stroke: #444; stroke-width: 2; }
  .combo.dis { background: #f0f0f0; }
  .dis select { background: none; color: #808080; border-color: transparent; opacity: 1; }
  .dis .drop { background: #cacaca; }
  .dis .drop svg { stroke: #a5a5a5; }
  .checks { padding-top: 26px; }
  .check { display: flex; align-items: center; gap: 7px; height: 33px; white-space: nowrap; }
  .check input { position: relative; appearance: none; width: 22px; height: 22px; border: 2px solid #333; background: #fff; flex: none; }
  .check input:checked::after { content: ""; position: absolute; left: 6px; top: 0; width: 5px; height: 11px; border: solid #333; border-width: 0 2px 2px 0; transform: rotate(42deg); }
  .check input:disabled { border-color: #ccc; }
  .srclabel { display: block; margin: 3px 0 0 15px; height: 30px; }
  .source { display: flex; height: 35px; width: 574px; margin-left: 15px; border: 2px solid #ababab; }
  .source input { flex: 1; min-width: 0; padding: 0 6px; }
  .source button { display: flex; align-items: center; justify-content: center; width: 38px; margin: -2px; border: 2px solid #a0a0a0; background: #e6e6e6; }
  .source svg { width: 28px; height: 22px; }
  .apply { margin-top: 78px; }
  .actions { display: flex; gap: 17px; padding-top: 15px; width: 654px; }
  .actions button { width: 128px; height: 38px; line-height: 30px; background: #e1e1e1; border: 2px solid #adadad; white-space: nowrap; }
  .actions .clear { width: 133px; margin-right: auto; }
  .actions .ok { border: 3px solid #0078d7; }
  u { text-underline-offset: 3px; }
</style>
